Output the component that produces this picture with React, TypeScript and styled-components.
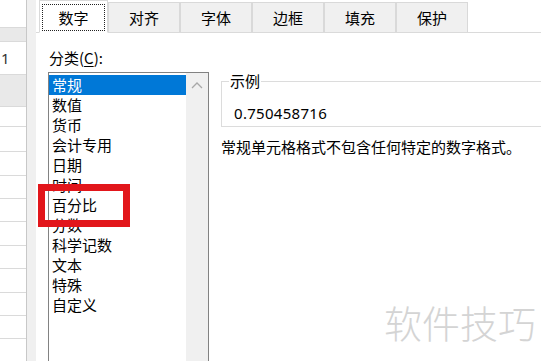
import React from "react"
import styled, { createGlobalStyle } from "styled-components"

const GlobalStyle = createGlobalStyle`
  html, body {
    margin: 0;
    padding: 0;
    background: #ffffff;
  }
  body {
    font-family: "Noto Sans CJK SC", "Noto Sans", sans-serif;
    color: #000;
  }
`

const Screen = styled.div`
  position: relative;
  width: 541px;
  height: 361px;
  overflow: hidden;
  display: flex;
  flex-direction: row;
  background: #fff;
`

// sheet cells peeking out on the left
const SheetColumn = styled.div`
  width: 26px;
  display: flex;
  flex-direction: column;
  border-right: 1px solid #c8c8c8;
`
const SheetRow = styled.div<{ $h: number; $shade?: boolean }>`
  height: ${p => p.$h}px;
  flex-shrink: 0;
  box-sizing: border-box;
  border-bottom: 1px solid #dadada;
  background: ${p => (p.$shade ? "#e9e9e9" : "#fff")};
  font-family: "Noto Sans", sans-serif;
  font-size: 15px;
  color: #333;
  display: flex;
  align-items: center;
  padding-left: 1px;
`
const DialogEdge = styled.div`
  width: 9px;
  background: #f0f0f0;
`

const Dialog = styled.div`
  flex: 1;
  display: flex;
  flex-direction: column;
  background: #fff;
`
const TabBar = styled.div`
  height: 33px;
  display: flex;
  align-items: flex-end;
  padding-left: 3px;
  background: #fff;
  border-bottom: 1px solid #dadada;
  box-sizing: border-box;
`
const Tab = styled.div<{ $active?: boolean }>`
  width: ${p => (p.$active ? 69 : 72)}px;
  height: ${p => (p.$active ? 33 : 30)}px;
  box-sizing: border-box;
  background: ${p => (p.$active ? "#fff" : "#f0f0f0")};
  border: 1px solid #d9d9d9;
  border-bottom: ${p => (p.$active ? "1px solid #fff" : "none")};
  margin-bottom: ${p => (p.$active ? -1 : 0)}px;
  display: flex;
  align-items: center;
  justify-content: center;
  font-size: 15px;
  padding: ${p => (p.$active ? "3px 2px 1px" : "0")};
`
const FocusRing = styled.span`
  flex: 1;
  align-self: stretch;
  display: flex;
  align-items: center;
  justify-content: center;
  border: 1px dotted #222;
`

const Body = styled.div`
  flex: 1;
  display: flex;
  flex-direction: row;
  padding: 14px 0 0 12px;
  gap: 12px;
`
const LeftCol = styled.div`
  display: flex;
  flex-direction: column;
`
const Label = styled.div`
  font-size: 15px;
  height: 25px;
  line-height: 22px;
  padding-left: 1px;
  u {
    text-decoration-thickness: 1px;
    text-underline-offset: 2px;
  }
`
const ListBox = styled.div`
  width: 161px;
  flex: 1;
  box-sizing: border-box;
  border: 1px solid #828282;
  border-bottom: none;
  display: flex;
  flex-direction: row;
`
const Items = styled.div`
  flex: 1;
  padding-top: 2px;
  display: flex;
  flex-direction: column;
`
const Item = styled.div<{ $selected?: boolean }>`
  height: 20px;
  line-height: 20px;
  font-size: 15px;
  padding-left: 3px;
  background: ${p => (p.$selected ? "#0078d7" : "transparent")};
  color: ${p => (p.$selected ? "#fff" : "#000")};
`
const ScrollTrack = styled.div`
  width: 22px;
  background: #f0f0f0;
  display: flex;
  justify-content: center;
  padding-top: 8px;
`

const RightCol = styled.div`
  flex: 1;
  display: flex;
  flex-direction: column;
  padding-top: 25px;
`
const GroupBox = styled.fieldset`
  margin: 0 -20px 0 0;
  padding: 0 0 8px 0;
  border: 1px solid #dcdcdc;
  border-right: none;
  height: 55px;
  box-sizing: border-box;
  legend {
    font-size: 15px;
    padding: 0 1px;
    margin-left: 7px;
    line-height: 18px;
  }
`
const SampleValue = styled.div`
  font-family: "Noto Sans", sans-serif;
  font-size: 15px;
  line-height: 22px;
  margin-top: 12px;
  padding-left: 12px;
  letter-spacing: 0.3px;
`
const Description = styled.div`
  font-size: 15px;
  margin-top: 9px;
  white-space: nowrap;
`

const Highlight = styled.div`
  position: absolute;
  left: 38px;
  top: 184px;
  width: 92px;
  height: 43px;
  box-sizing: border-box;
  border: 7px solid #e2161b;
  pointer-events: none;
`
const Watermark = styled.div`
  position: absolute;
  left: 384px;
  top: 294px;
  font-size: 38px;
  font-weight: 300;
  color: #d4d4d4;
  white-space: nowrap;
`

const categories = ["常规", "数值", "货币", "会计专用", "日期", "时间", "百分比", "分数", "科学记数", "文本", "特殊", "自定义"]
const tabs = ["数字", "对齐", "字体", "边框", "填充", "保护"]

const sheetRows: { h: number; shade?: boolean; text?: string }[] = [
  { h: 28 },
  { h: 14, shade: true },
  { h: 33, text: "1" },
  { h: 32, shade: true },
  { h: 20 },
  { h: 25 },
  { h: 24 },
  { h: 23 },
  { h: 23 },
  { h: 24 },
  { h: 23 },
  { h: 24 },
  { h: 23 },
  { h: 23 },
  { h: 23 },
]

const App = () => {
  return (
    <Screen>
      <GlobalStyle />
      <SheetColumn>
        {sheetRows.map((r, i) => (
          <SheetRow key={i} $h={r.h} $shade={r.shade}>{r.text}</SheetRow>
        ))}
      </SheetColumn>
      <DialogEdge />
      <Dialog>
        <TabBar>
          {tabs.map((t, i) =>
            i === 0 ? (
              <Tab key={t} $active><FocusRing>{t}</FocusRing></Tab>
            ) : (
              <Tab key={t}>{t}</Tab>
            )
          )}
        </TabBar>
        <Body>
          <LeftCol>
            <Label>分类(<u>C</u>):</Label>
            <ListBox>
              <Items>
                {categories.map((c, i) => (
                  <Item key={c} $selected={i === 0}>{c}</Item>
                ))}
              </Items>
              <ScrollTrack>
                <svg width="12" height="8" viewBox="0 0 12 8">
                  <path d="M1 7 L6 2 L11 7" fill="none" stroke="#a8a8a8" strokeWidth="1.3" />
                </svg>
              </ScrollTrack>
            </ListBox>
          </LeftCol>
          <RightCol>
            <GroupBox>
              <legend>示例</legend>
              <SampleValue>0.750458716</SampleValue>
            </GroupBox>
            <Description>常规单元格格式不包含任何特定的数字格式。</Description>
          </RightCol>
        </Body>
      </Dialog>
      <Highlight />
      <Watermark>软件技巧</Watermark>
    </Screen>
  )
}

export default App
